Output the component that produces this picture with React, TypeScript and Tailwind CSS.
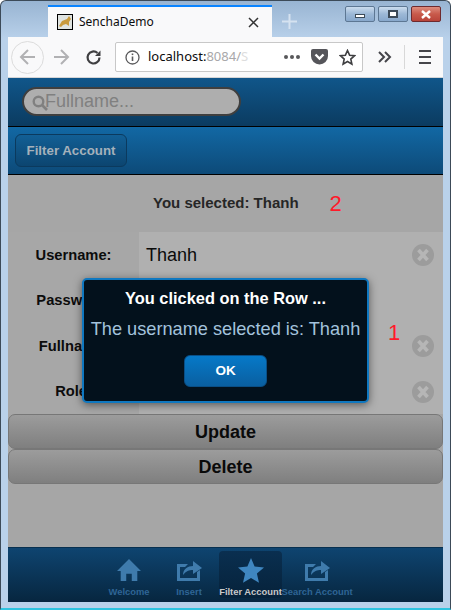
import React from "react";

const Clear = () => (
  <div className="w-[22px] h-[22px] rounded-full bg-[#9c9c9c] flex items-center justify-center shrink-0">
    <svg width="14" height="14" viewBox="0 0 14 14">
      <path d="M2.5 2L11.5 12M11.5 2L2.5 12" stroke="#b6b6b6" strokeWidth="3.6" />
    </svg>
  </div>
);

const Row = ({ label, value, h, clear = true }: { label: string; value?: string; h: string; clear?: boolean }) => (
  <div className={`flex ${h}`}>
    <div className="w-[131px] bg-[#a7a7a7] flex items-center justify-center text-[14.7px] font-bold text-[#0c0c0c] shrink-0">
      {label}
    </div>
    <div className="flex-1 bg-[#b0b0b0] flex items-center justify-between pl-[7px] pr-[9px] text-[18px] text-[#0a0a0a]">
      <span>{value}</span>
      {clear && <Clear />}
    </div>
  </div>
);

const Share = () => (
  <svg width="26" height="21" viewBox="0 0 26 21" fill="#3f7bac">
    <path d="M1 4h11l-3 3H4v11h17v-6l3-2v11H1z" />
    <path d="M7 15c0-6 5-9 10-9V1l9 7-9 6v-4c-4 0-7 1-10 5z" />
  </svg>
);

const Tab = ({ label, icon, active, w }: { label: string; icon: React.ReactNode; active?: boolean; w: string }) => (
  <div className={`${w} h-[47px] rounded-[4px] flex flex-col items-center justify-end pb-[1px] shrink-0 ${active ? "bg-[linear-gradient(#0a2f50,#06223a)]" : ""}`}>
    <div className="h-[26px] flex items-center justify-center mb-[3px]">{icon}</div>
    <span className={`text-[9.4px] leading-[11px] font-bold whitespace-nowrap ${active ? "text-[#c9c9c9]" : "text-[#2f6595]"}`}>{label}</span>
  </div>
);

export default function App() {
  return (
    <div className="relative w-[451px] h-[615px] bg-white overflow-hidden font-['Liberation_Sans',Arial,sans-serif]">
      <div className="h-[610px] pt-[4px] px-[7px] pb-[6px] rounded-t-[6px] border-t border-x border-[#3c4a58] border-b-[#2ec4e0] border-b-2 bg-[linear-gradient(#98b4d2,#b9d1ea_38px,#b9d1ea)] flex flex-col">
        {/* Tab strip */}
        <div className="h-[32px] flex shrink-0 relative">
          <div className="ml-[40px] w-[224px] bg-[#f9f9fa] border-t-2 border-[#0a84ff] flex items-center pl-[9px] pr-[11px]">
            <div className="w-[16px] h-[16px] border border-black bg-[#e0d8c0] flex items-center justify-center shrink-0">
              <svg width="14" height="14" viewBox="0 0 14 14">
                <rect width="14" height="14" fill="#dfe3e0" />
                <path d="M1 11l3-5 5-2 2-3 2 3-2 3 0 4-3-2-3 1-2 2z" fill="#c99a3c" />
              </svg>
            </div>
            <span className="ml-[6px] text-[12px] text-[#0c0c0d] font-['Noto_Sans',sans-serif] flex-1">SenchaDemo</span>
            <svg width="11" height="11" viewBox="0 0 11 11" className="mr-[2px]">
              <path d="M1 1l9 9M10 1l-9 9" stroke="#333" strokeWidth="1.5" />
            </svg>
          </div>
          <svg width="15" height="15" viewBox="0 0 15 15" className="ml-[10px] mt-[9px]">
            <path d="M7.5 0v15M0 7.5h15" stroke="#d5e2f0" strokeWidth="2" />
          </svg>
          <div className="absolute right-[2px] top-[1px] flex gap-[3px]">
            <div className="w-[30px] h-[16px] rounded-[2px] border border-[#5d7793] bg-[linear-gradient(#cbdcee,#9cb8d6_50%,#88a8cc)] flex items-center justify-center">
              <div className="w-[10px] h-[4px] mt-[3px] border border-[#3c4a58] bg-white" />
            </div>
            <div className="w-[30px] h-[16px] rounded-[2px] border border-[#5d7793] bg-[linear-gradient(#cbdcee,#9cb8d6_50%,#88a8cc)] flex items-center justify-center">
              <div className="w-[10px] h-[8px] border-2 border-[#3c4a58] bg-white" />
            </div>
            <div className="w-[30px] h-[16px] rounded-[2px] border border-[#6e2a2e] bg-[linear-gradient(#dd8d7f,#c85a4b_50%,#b8443a)] flex items-center justify-center">
              <svg width="12" height="9" viewBox="0 0 12 9">
                <path d="M2 1l8 7M10 1l-8 7" stroke="#fff" strokeWidth="2.4" />
              </svg>
            </div>
          </div>
        </div>
        {/* Nav bar */}
        <div className="h-[41px] bg-[#f9f9fa] border-b border-[#d5d5d6] flex items-center shrink-0 relative">
          <div className="ml-[3px] w-[33px] h-[33px] rounded-full border border-[#dcdcdc] flex items-center justify-center">
            <svg width="18" height="18" viewBox="0 0 18 18" fill="none" stroke="#b1b1b3" strokeWidth="2">
              <path d="M16 9H2M9 2L2 9l7 7" />
            </svg>
          </div>
          <svg width="18" height="18" viewBox="0 0 18 18" fill="none" stroke="#b1b1b3" strokeWidth="2" className="ml-[8px]">
            <path d="M2 9h14M9 2l7 7-7 7" />
          </svg>
          <svg width="17" height="17" viewBox="0 0 17 17" fill="none" stroke="#3f3f41" strokeWidth="2.2" className="ml-[15px]">
            <path d="M14.5 8.5a6 6 0 1 1-2-4.5" />
            <path d="M15.5 1.5v5.5H10" fill="#3f3f41" stroke="none" />
          </svg>
          <div className="ml-[13px] w-[248px] h-[30px] bg-white border border-[#c8c8c8] rounded-[2px] flex items-center pl-[9px]">
            <svg width="15" height="15" viewBox="0 0 15 15" fill="none" stroke="#5a5a5c" strokeWidth="1.3">
              <circle cx="7.5" cy="7.5" r="6.5" />
              <path d="M7.5 6.5v4.5" strokeWidth="1.6" />
              <path d="M7.5 3.5v1.6" strokeWidth="1.6" />
            </svg>
            <span className="ml-[8px] text-[13px] font-['Noto_Sans',sans-serif] text-[#0c0c0d] whitespace-nowrap">
              localhost:<span className="text-[#a8a8aa]">8084/</span><span className="text-[#dddddd]">S</span>
            </span>
            <div className="ml-auto mr-[6px] flex items-center gap-[11px]">
              <div className="flex gap-[2px]">
                <div className="w-[4px] h-[4px] rounded-full bg-[#58585a]" />
                <div className="w-[4px] h-[4px] rounded-full bg-[#58585a]" />
                <div className="w-[4px] h-[4px] rounded-full bg-[#58585a]" />
              </div>
              <svg width="17" height="16" viewBox="0 0 17 16">
                <path d="M0 2a2 2 0 0 1 2-2h13a2 2 0 0 1 2 2v5a8.5 8.5 0 0 1-17 0z" fill="#55555a" />
                <path d="M4.5 5.5l4 4 4-4" fill="none" stroke="#fff" strokeWidth="2.4" />
              </svg>
              <svg width="17" height="17" viewBox="0 0 17 17" fill="none" stroke="#3f3f41" strokeWidth="1.6">
                <path d="M8.5 1.5l2.1 4.7 5 .5-3.8 3.4 1.1 5-4.4-2.6-4.4 2.6 1.1-5L1.4 6.7l5-.5z" />
              </svg>
            </div>
          </div>
          <svg width="14" height="12" viewBox="0 0 14 12" fill="none" stroke="#45454a" strokeWidth="2" className="ml-[15px]">
            <path d="M1 1l5 5-5 5M7 1l5 5-5 5" />
          </svg>
          <div className="ml-[12px] w-px h-[24px] bg-[#d8d8d8]" />
          <div className="ml-[14px] flex flex-col gap-[4px]">
            <div className="w-[12px] h-[2px] bg-[#45454a]" />
            <div className="w-[12px] h-[2px] bg-[#45454a]" />
            <div className="w-[12px] h-[2px] bg-[#45454a]" />
          </div>
        </div>
        {/* App */}
        <div className="relative flex-1 flex flex-col min-h-0 bg-[#a6a6a6]">
          <div className="h-[49px] shrink-0 bg-[linear-gradient(#10568a,#0b3b60)] border-b border-black flex items-center pl-[14px] pb-[1px]">
            <div className="w-[219px] h-[29px] rounded-full bg-[#aeaeae] border-2 border-[#3f3f3f] flex items-center pl-[8px] text-[18px] text-[#808080]">
              <svg width="17" height="17" viewBox="0 0 17 17" fill="none" stroke="#808080" className="shrink-0 mt-[4px]">
                <circle cx="6.5" cy="6.5" r="4.8" strokeWidth="2.4" />
                <path d="M10 10l5 5" strokeWidth="2.6" />
              </svg>
              <span className="-ml-[4px]">Fullname...</span>
            </div>
          </div>
          <div className="h-[48px] shrink-0 bg-[linear-gradient(#1268a4,#0d4a78)] border-b border-black flex items-center pl-[7px]">
            <div className="w-[112px] h-[33px] rounded-[6px] border border-[#0b3a5e] bg-[linear-gradient(#125f95,#0c4570)] flex items-center justify-center text-[13.3px] font-bold text-[#a5b1bb]">
              Filter Account
            </div>
          </div>
          <div className="h-[57px] shrink-0 flex items-center pl-[145px] text-[15px] font-bold text-[#262626]">
            <span>You selected: Thanh</span>
            <span className="ml-[31px] text-[22px] font-normal leading-none text-[#ff1a2a]">2</span>
          </div>
          <Row label="Username:" value="Thanh" h="h-[46px]" />
          <Row label="Password:" h="h-[45px]" clear={false} />
          <Row label="Fullname:" h="h-[46px]" />
          <Row label="Role:" h="h-[45px]" />
          <div className="h-[35px] shrink-0 rounded-[7px] border border-[#777] bg-[linear-gradient(#9c9c9c,#7f7f7f)] flex items-center justify-center pt-[1px] text-[18px] font-bold text-[#0a0a0a]">
            Update
          </div>
          <div className="h-[35px] shrink-0 rounded-[7px] border border-[#777] bg-[linear-gradient(#9c9c9c,#7f7f7f)] flex items-center justify-center pt-[1px] text-[18px] font-bold text-[#0a0a0a]">
            Delete
          </div>
          <div className="flex-1" />
          <div className="h-[55px] shrink-0 bg-[linear-gradient(#0e4470,#07263f)] border-t border-[#08304f] flex items-start justify-center pt-[3px] pl-[5px]">
            <Tab
              label="Welcome"
              w="w-[50px] mr-[15px]"
              icon={
                <svg width="24" height="24" viewBox="0 0 26 24" fill="#3f7bac">
                  <path d="M13 0L0 13h4v11h6v-8h6v8h6V13h4z" />
                </svg>
              }
            />
            <Tab label="Insert" w="w-[40px] mr-[10px]" icon={<Share />} />
            <Tab
              label="Filter Account"
              active
              w="w-[63px]"
              icon={
                <svg width="26" height="25" viewBox="0 0 26 25" fill="#3f86c0">
                  <path d="M13 0l3.6 8.6 9.4.8-7.1 6.1 2.1 9.2L13 19.9l-8 4.8 2.1-9.2L0 9.4l9.4-.8z" />
                </svg>
              }
            />
            <Tab label="Search Account" w="w-[70px]" icon={<Share />} />
          </div>

          {/* Modal */}
          <div className="absolute left-[74px] top-[200px] w-[287px] h-[125px] rounded-[5px] border-2 border-[#0f78c0] bg-[#03111c] shadow-[0_2px_8px_rgba(0,0,0,0.5)] flex flex-col items-center">
            <div className="mt-[8px] text-[16.4px] leading-[20px] font-bold text-white">You clicked on the Row ...</div>
            <div className="mt-[10px] text-[18.2px] leading-[22px] text-[#a3c3dc] whitespace-nowrap">The username selected is: Thanh</div>
            <div className="mt-[15px] w-[83px] h-[32px] rounded-[6px] border border-[#0a4f86] bg-[linear-gradient(#0679c8,#0a5fa0)] flex items-center justify-center text-[13.5px] font-bold text-white">
              OK
            </div>
          </div>
          <span className="absolute left-[380px] top-[244px] text-[22px] leading-none text-[#ff1a2a]">1</span>
        </div>
      </div>
    </div>
  );
}
